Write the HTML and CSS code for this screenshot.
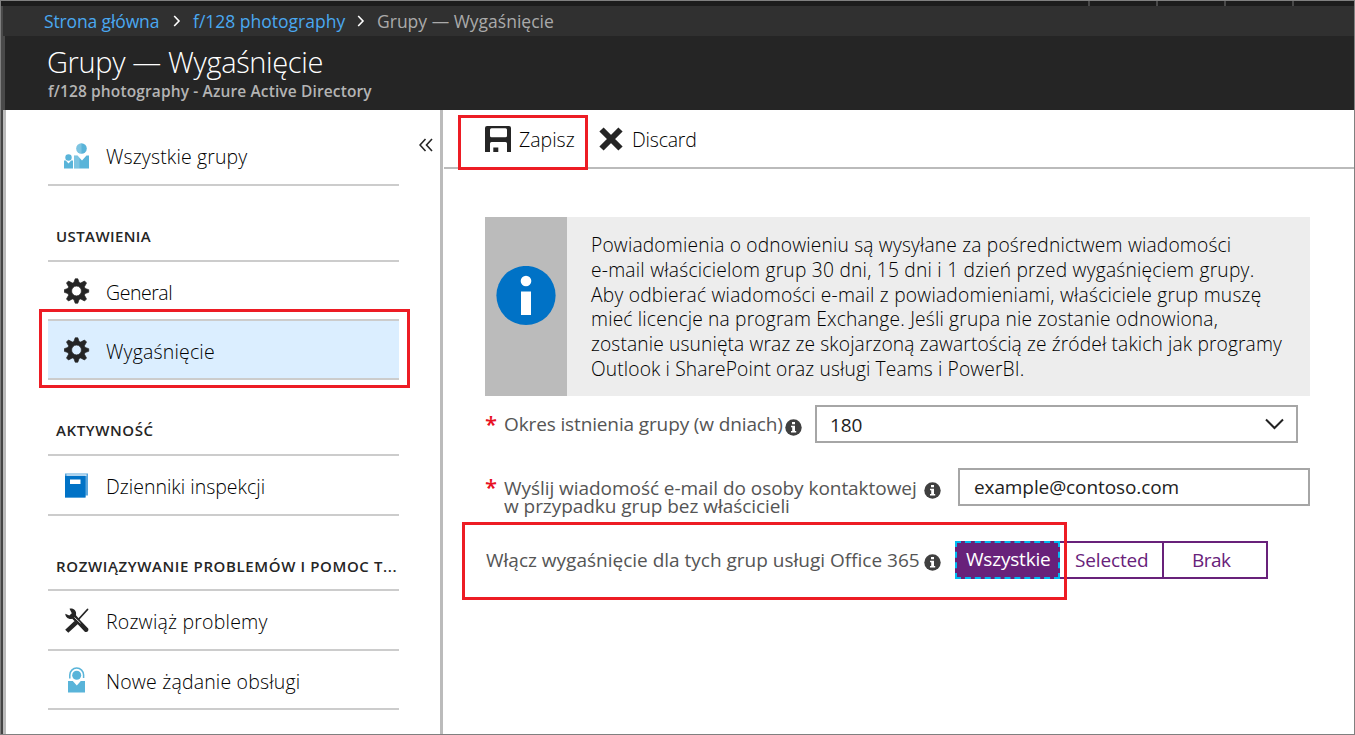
FILE: index.html
```html
<!DOCTYPE html>
<html lang="pl">
<head>
<meta charset="utf-8">
<title>Grupy — Wygaśnięcie</title>
<link rel="stylesheet" href="styles.css">
</head>
<body>
<div class="frame">
  <div class="topstrip"><i></i><i></i><i></i><i></i></div>
  <nav class="crumbs">
    <a class="c1">Strona główna</a>
    <svg class="sep" width="8" height="12" viewBox="0 0 8 12"><path d="M1.2 1l4.8 5-4.8 5"/></svg>
    <a class="c2">f/128 photography</a>
    <svg class="sep" width="8" height="12" viewBox="0 0 8 12"><path d="M1.2 1l4.8 5-4.8 5"/></svg>
    <span class="c3">Grupy — Wygaśnięcie</span>
  </nav>
  <header class="head">
    <h1>Grupy — Wygaśnięcie</h1>
    <p>f/128 photography - Azure Active Directory</p>
  </header>
  <div class="body">
    <aside class="side">
      <svg class="collapse" width="14" height="14" viewBox="0 0 14 14"><path d="M6.500 1L1 7l5.500 6M13 1L7.500 7l5.500 6"/></svg>
      <div class="item first">
        <svg class="ico" width="26" height="26" viewBox="0 0 26 26"><g fill="#59b4d9"><circle cx="17.500" cy="5.500" r="5.300"/><circle cx="4.500" cy="14.500" r="3.200"/><path d="M10 12.500h3.500l4.500 5 4.500-5H25V25.500H10zM0 17.500h1.800L4.500 20.500l2.700-3H9V25.500H0z"/></g><path fill="#fff" opacity=".22" d="M17.500 .2a5.300 5.300 0 0 0 0 10.600zM10 12.500h3.500l2 2.300V25.500H10z"/></svg>
        <span class="t all">Wszystkie grupy</span>
      </div>
      <h2 class="settings">USTAWIENIA</h2>
      <div class="item">
        <svg class="ico" width="26" height="26" viewBox="-12.500 -13 26 26"><use href="#gear"/></svg>
        <span class="t general">General</span>
      </div>
      <div class="item active">
        <svg class="ico" width="26" height="26" viewBox="-12.500 -13 26 26"><use href="#gear"/></svg>
        <span class="t">Wygaśnięcie</span>
      </div>
      <h2 class="activity">AKTYWNOŚĆ</h2>
      <div class="item tall">
        <svg class="ico" width="26" height="26" viewBox="0 0 26 26"><path fill="#59a5dc" d="M1 1.500H24v22h-2.500v2H1z"/><path fill="#fff" d="M2.500 2.500h20v1.300h-20z"/><path fill="#0072c6" d="M1 3.800h20.500V25.500H1z"/><path fill="#fff" d="M6 7.500h10.500V12H6z"/></svg>
        <span class="t logs">Dzienniki inspekcji</span>
      </div>
      <h2 class="help">ROZWIĄZYWANIE PROBLEMÓW I POMOC T...</h2>
      <div class="item tall">
        <svg class="ico" width="26" height="26" viewBox="0 -1 26 26"><path d="M23.500 1.500L13 13" stroke="#252525" stroke-width="1.800" stroke-linecap="round"/><path fill="#252525" d="M11.800 11.700l3.200 3.200L4.300 24.800 1.200 21.700zM5.500 .8C9-.2 13 2.500 12 7.200l4.700 5.600 7.500 7.700c1 2.200-1.200 4.300-3.400 3.200L14 16.500 8.200 10.800C5 11.800 1.300 9.500 1.300 5.800l4 1.800 2.500-2.300z"/><path d="M10.500 9.500l6 5.700" stroke="#fff" stroke-width=".8"/></svg>
        <span class="t solve">Rozwiąż problemy</span>
      </div>
      <div class="item">
        <svg class="ico" width="26" height="26" viewBox="0 0 26 26"><path fill="none" stroke="#59b4d9" stroke-width="1.500" d="M5.800 11.500V8a6.900 6.900 0 0 1 13.800 0v3"/><circle cx="12.700" cy="8.300" r="4.500" fill="#59b4d9"/><path fill="#59b4d9" d="M4 14h4.800l4 4.600 4-4.600H21v11.500H4z"/></svg>
        <span class="t">Nowe żądanie obsługi</span>
      </div>
      <div class="mark mark-side"></div>
    </aside>
    <main class="main">
      <div class="toolbar">
        <svg width="26" height="26" viewBox="0 0 26 26"><path fill="#252525" fill-rule="evenodd" d="M2 0h22a2 2 0 0 1 2 2v24h-4v-8.500a1.500 1.500 0 0 0-1.500-1.500h-14A1.500 1.500 0 0 0 5 17.500V26H0V2a2 2 0 0 1 2-2zm4.500 2.300A1.500 1.500 0 0 0 5 3.800v6a1.500 1.500 0 0 0 1.500 1.500h14A1.500 1.500 0 0 0 22 9.800v-6a1.500 1.500 0 0 0-1.500-1.500zM8.300 21.500h5V26h-5z"/></svg>
        <span class="save">Zapisz</span>
        <svg class="x" width="24" height="24" viewBox="0 0 24 24"><path d="M2.500 2.500l19 19M21.500 2.500l-19 19" stroke="#252525" stroke-width="6"/></svg>
        <span class="discard">Discard</span>
        <div class="mark mark-save"></div>
      </div>
      <section class="info">
        <div class="info-ico"><svg width="60" height="60" viewBox="0 0 60 60"><circle cx="30" cy="29.500" r="29.600" fill="#0072c6"/><circle cx="30" cy="15" r="5.300" fill="#fff"/><path fill="#fff" d="M25 25.500h10V49H25z"/></svg></div>
        <p class="info-text">
          <span class="n1">Powiadomienia o odnowieniu są wysyłane za pośrednictwem wiadomości</span><br>
          <span class="n2">e-mail właścicielom grup 30 dni, 15 dni i 1 dzień przed wygaśnięciem grupy.</span><br>
          <span class="n2">Aby odbierać wiadomości e-mail z powiadomieniami, właściciele grup muszę</span><br>
          <span class="n1">mieć licencje na program Exchange. Jeśli grupa nie zostanie odnowiona,</span><br>
          <span class="n3">zostanie usunięta wraz ze skojarzoną zawartością ze źródeł takich jak programy</span><br>
          <span class="n3">Outlook i SharePoint oraz usługi Teams i PowerBI.</span>
        </p>
      </section>
      <div class="row row1">
        <b class="req">*</b>
        <label class="l1">Okres istnienia grupy (w dniach)</label>
        <svg class="tip" width="17" height="17" viewBox="0 0 17 17"><use href="#tip"/></svg>
        <div class="select"><span>180</span><svg width="19" height="12" viewBox="0 0 19 12"><path d="M1 1.500l8.500 8.500L18 1.500" fill="none" stroke="#222" stroke-width="2"/></svg></div>
      </div>
      <div class="row row2">
        <b class="req">*</b>
        <label class="l2">Wyślij wiadomość e-mail do osoby kontaktowej<br>w przypadku grup bez właścicieli</label>
        <svg class="tip" width="17" height="17" viewBox="0 0 17 17"><use href="#tip"/></svg>
        <div class="input">example@contoso.com</div>
      </div>
      <div class="row row3">
        <label class="l3">Włącz wygaśnięcie dla tych grup usługi Office 365</label>
        <svg class="tip" width="17" height="17" viewBox="0 0 17 17"><use href="#tip"/></svg>
        <div class="seg">
          <span class="on">Wszystkie</span>
          <span class="mid">Selected</span>
          <span class="end">Brak</span>
        </div>
        <div class="mark mark-seg"></div>
      </div>
    </main>
  </div>
</div>
<svg class="defs" width="0" height="0"><defs>
  <g id="gear" fill="#252525"><path fill-rule="evenodd" d="M-2.600-8.500L-1.300-12.200h2.600L2.600-8.500L4.200-7.900L8-10L10-8L7.900-4.200L8.500-2.600L12.200-1.300V1.300L8.500 2.600L7.900 4.200L10 8L8 10L4.200 7.900L2.600 8.500L1.300 12.200h-2.600L-2.600 8.500L-4.200 7.900L-8 10L-10 8L-7.900 4.200L-8.500 2.600L-12.200 1.300V-1.300L-8.500-2.600L-7.900-4.200L-10-8L-8-10L-4.200-7.900ZM0-4.900a4.900 4.900 0 1 0 0 9.800a4.900 4.900 0 1 0 0-9.800z" stroke="#252525" stroke-width=".7" stroke-linejoin="round"/></g>
  <g id="tip"><circle cx="8.500" cy="8.500" r="8.200" fill="#404040"/><path fill="#fff" d="M7 3h3v2.300H7zM6 6.700h4v5.300h1.200v1.500H6V12h1.200V8.200H6z"/></g>
</defs></svg>
</body>
</html>
```

FILE: styles.css
```css
* { box-sizing: border-box; }
body { margin: 0; background: #fff; font-family: "Open Sans", "Noto Sans", sans-serif; font-size: 19px; color: #000; white-space: nowrap; }
.defs { position: absolute; }
svg { flex: none; display: block; }
.frame { width: 1355px; height: 735px; border: 1px solid #808080; display: flex; flex-direction: column; overflow: hidden; }

.topstrip { height: 5px; background: #1c1c1c; display: flex; justify-content: flex-end; gap: 66px; padding-right: 60px; flex: none; }
.topstrip i { width: 2px; background: #484848; }

.crumbs { height: 30px; flex: none; background: #303030; border-left: 2px solid #4a4a4a; display: flex; align-items: center; padding-left: 41px; font-size: 17.500px; line-height: 28px; color: #aaa; }
.crumbs a { color: #4aa8f0; }
.c1 { width: 129px; letter-spacing: -.13px; }
.c2 { width: 164px; }
.sep { fill: none; stroke: #fff; stroke-width: 1.6; margin-right: 12px; }

.head { height: 74px; flex: none; background: #252525; border-left: 4px solid #4a4a4a; padding: 7px 0 0 42px; color: #fff; }
.head h1 { margin: 0; font-size: 29px; font-weight: 300; line-height: 38px; letter-spacing: -.37px; }
.head p { margin: 0; padding: 1px 0 0 1px; font-size: 15.500px; font-weight: 600; line-height: 18px; letter-spacing: .13px; color: #b4b4b4; }

.body { flex: 1; display: flex; min-height: 0; }
.side { position: relative; width: 442px; border-left: 5px solid #bbb; border-right: 3px solid #bbb; padding: 17px 41px 0 42px; flex: none; }
.side::before { content: ""; position: absolute; left: -5px; top: 0; bottom: 0; width: 2px; background: #444; }
.collapse { position: absolute; right: 7px; top: 28px; fill: none; stroke: #252525; stroke-width: 1.6; }
.item { height: 59px; border-bottom: 2px solid #ccc; display: flex; align-items: center; padding-left: 16px; font-size: 19.500px; font-weight: 350; gap: 16px; }
.item .t { padding-top: 3px; letter-spacing: .17px; }
.item .all { letter-spacing: .13px; padding-top: 2px; }
.item .general { letter-spacing: -.45px; }
.item .logs { letter-spacing: 0; }
.item .solve { letter-spacing: .2px; }
.item.tall { height: 60px; }
.item.active { background: #dbeeff; }
.side h2 { margin: 0; height: 76px; border-bottom: 2px solid #ccc; padding: 40px 0 0 8px; font-size: 15px; line-height: 20px; font-weight: 600; color: #252525; }
.side .settings { letter-spacing: .4px; }
.side .activity { letter-spacing: .6px; }
.side .help { height: 75px; letter-spacing: .62px; }
.mark { position: absolute; border: 3px solid #ed1c24; }
.mark-side { left: 33px; top: 199px; width: 371px; height: 79px; }

.main { position: relative; flex: 1; padding-left: 1px; }
.toolbar { position: relative; height: 59px; border-bottom: 2px solid #bbb; display: flex; align-items: center; padding-left: 41px; font-size: 19.500px; font-weight: 350; }
.save { width: 88px; padding: 1px 0 0 8px; }
.x { margin-right: 9px; }
.discard { padding-top: 1px; letter-spacing: -.2px; }
.mark-save { left: 14px; top: 5px; width: 130px; height: 55px; }

.info { display: flex; width: 825px; height: 179px; margin: 48px 0 0 41px; background: #ededed; }
.info-ico { width: 82px; background: #bbb; padding: 49px 11px 0; }
.info-text { margin: 0; padding: 16px 0 0 24px; font-size: 19.200px; line-height: 24.800px; font-weight: 350; }
.n1 { letter-spacing: .18px; }
.n2 { letter-spacing: .235px; }
.n3 { letter-spacing: .13px; }

.row { position: relative; display: flex; align-items: flex-start; margin-left: 41px; color: #555; }
.row1 { padding-top: 9px; height: 72px; }
.row2 { height: 73px; }
.req { width: 19px; color: #e81123; font-size: 22px; line-height: 36px; font-weight: 600; letter-spacing: -1px; }
.l1 { width: 281px; line-height: 39px; letter-spacing: -.13px; }
.l2 { width: 420px; line-height: 18px; padding-top: 11px; letter-spacing: -.05px; }
.tip { margin-top: 14px; }
.select, .input { height: 38px; border: 2px solid #a6a6a6; background: #fff; color: #222; line-height: 34px; letter-spacing: -.1px; }
.select { margin-left: 13px; width: 483px; display: flex; align-items: center; justify-content: space-between; padding: 0 12px 0 13px; }
.select span { padding-top: 1px; }
.input { margin-left: 17px; width: 352px; padding-left: 14px; }
.l3 { width: 439px; line-height: 38px; padding-left: 1px; }
.row3 .tip { margin-top: 13px; }
.seg { display: flex; margin-left: 14px; width: 313px; height: 38px; line-height: 34px; color: #68217a; }
.seg > span { border: 2px solid #68217a; }
.seg .on { width: 105px; padding-left: 9px; line-height: 32px; font-weight: 500; letter-spacing: -.2px; background: #68217a; color: #fff; border: 2px dashed #00bcf2; }
.seg .mid { width: 104px; border-left: 0; padding-left: 15px; letter-spacing: -.15px; }
.seg .end { width: 104px; border-left: 0; padding-left: 28px; letter-spacing: -.5px; }
.mark-seg { left: -23px; top: -19px; width: 605px; height: 78px; }
```
